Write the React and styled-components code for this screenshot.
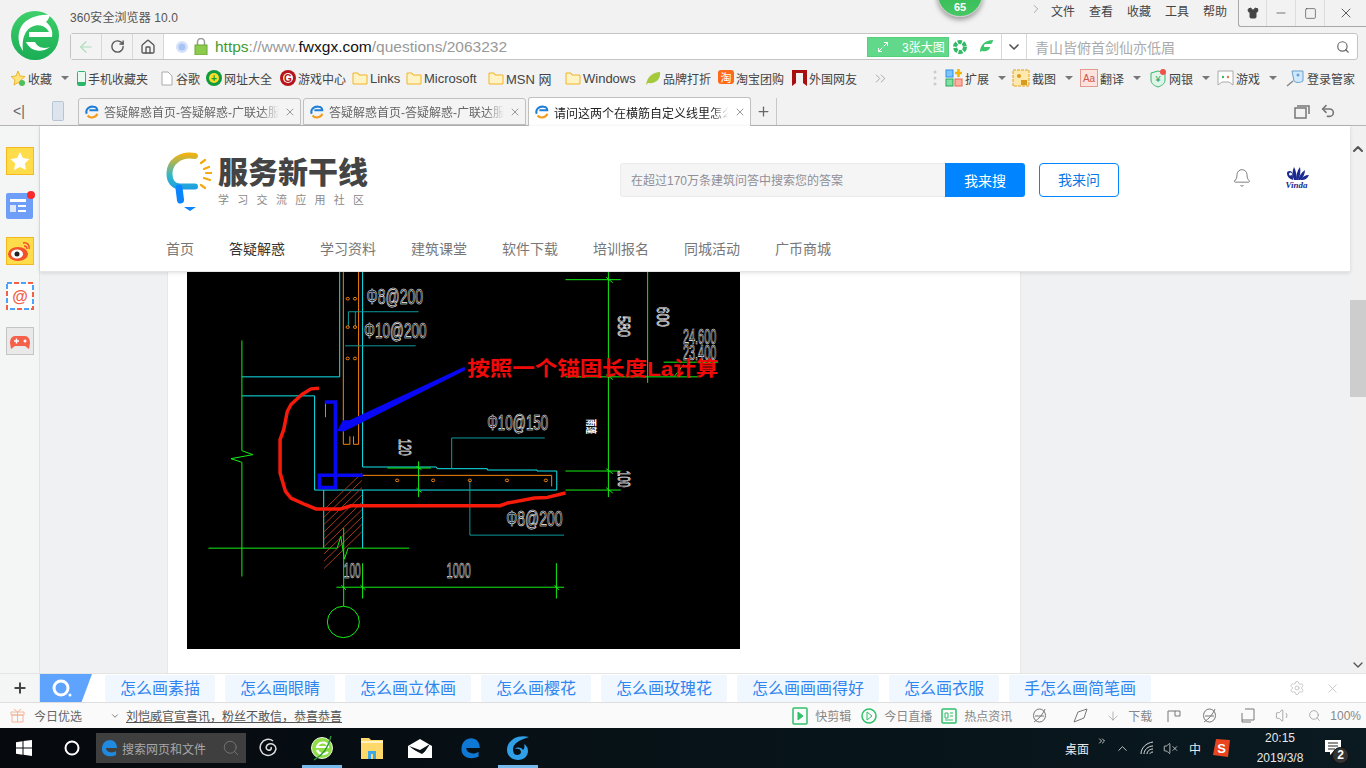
import styled, { createGlobalStyle } from 'styled-components';
import {
  ArrowLeft, RotateCw, Home, Search, ChevronDown, ChevronRight, Plus, X, Minus, Square, Bell,
  Settings, ArrowDown, Undo2, Shirt, ChevronUp, ChevronsRight, Maximize2, Volume1, VolumeX,
} from 'lucide-react';

const GlobalStyle = createGlobalStyle`
  html, body { margin: 0; padding: 0; height: 100%; overflow: hidden; }
  body { font-family: "Liberation Sans", "Noto Sans CJK SC", sans-serif; font-size: 12px; color: #444; }
  * { box-sizing: border-box; }
`;

const Screen = styled.div`
  width: 1366px;
  height: 768px;
  display: flex;
  flex-direction: column;
  background: #f2f2f2;
  overflow: hidden;
`;

/* ---------- browser chrome ---------- */
const TopChrome = styled.div`
  position: relative;
  display: grid;
  grid-template-columns: 70px 1fr;
  grid-template-rows: 33px 27px;
  flex: none;
`;
const LogoCell = styled.div`
  grid-row: 1 / 3;
  padding: 11px 0 0 11px;
`;
const TitleRow = styled.div`
  display: flex;
  align-items: flex-start;
  justify-content: space-between;
`;
const TitleText = styled.div`
  margin-top: 8px;
  font-size: 12px;
  letter-spacing: 0.1px;
  color: #555;
`;
const MenuArea = styled.div`
  display: flex;
  align-items: flex-start;
  color: #444;
`;
const MenuItem = styled.span`
  margin: 2px ${(p) => p.$mr ?? 14}px 0 0;
  font-size: 12px;
`;
const WindowBox = styled.div`
  display: flex;
  height: 27px;
  margin-left: -3px;
  border-left: 1px solid #a8a8a8;
  border-bottom: 1px solid #a8a8a8;
  border-bottom-left-radius: 3px;
`;
const WindowBtn = styled.div`
  width: ${(p) => p.$w}px;
  display: flex;
  align-items: center;
  justify-content: center;
  border-right: ${(p) => (p.$last ? 'none' : '1px solid #dcdcdc')};
  color: #444;
`;
const ScoreBadge = styled.div`
  position: absolute;
  left: 937px;
  top: -29px;
  width: 46px;
  height: 46px;
  border-radius: 50%;
  background: linear-gradient(#27b24a, #46c764);
  border: 1px solid #c9c9c9;
  box-shadow: 0 3px 5px rgba(0, 0, 0, 0.35);
  color: #fff;
  font-size: 11px;
  font-weight: bold;
  text-align: center;
  padding-top: 29px;
`;
const AddressBar = styled.div`
  display: flex;
  align-items: center;
  height: 27px;
  margin-right: 8px;
  background: #fff;
  border: 1px solid #c4c4c4;
  border-radius: 3px;
`;
const NavButton = styled.div`
  width: 31px;
  height: 100%;
  flex: none;
  display: flex;
  align-items: center;
  justify-content: center;
  background: #f3f3f3;
  border-right: 1px solid #d8d8d8;
  color: ${(p) => p.$color || '#555'};
`;
const UrlArea = styled.div`
  flex: 1;
  display: flex;
  align-items: center;
  gap: 6px;
  padding-left: 12px;
  min-width: 0;
`;
const Url = styled.div`
  margin-left: 1px;
  font-size: 15.5px;
  color: #999;
  white-space: nowrap;
  b { font-weight: normal; color: #111; }
  i { font-style: normal; color: #3f9b2f; }
`;
const BigPicBtn = styled.div`
  width: 82px;
  height: 20px;
  display: flex;
  align-items: center;
  gap: 13px;
  padding-left: 9px;
  background: #62d98a;
  border: 1px solid #55cf7e;
  color: #fff;
  font-size: 12px;
  flex: none;
`;
const AddrIcons = styled.div`
  display: flex;
  gap: 12px;
  padding: 0 7px 0 4px;
  align-items: center;
  flex: none;
`;
const DropCell = styled.div`
  width: 26px;
  height: 100%;
  display: flex;
  align-items: center;
  justify-content: center;
  flex: none;
  border-left: 1px solid #d8d8d8;
  border-right: 1px solid #d8d8d8;
  color: #555;
`;
const SearchCell = styled.div`
  width: 330px;
  display: flex;
  align-items: center;
  justify-content: space-between;
  padding: 0 7px 0 8px;
  color: #aaa;
  font-size: 14px;
  flex: none;
`;
const BookmarkRow = styled.div`
  display: flex;
  align-items: center;
  height: 37px;
  padding: 0 0 1px 10px;
  flex: none;
`;
const Bookmark = styled.div`
  display: flex;
  align-items: center;
  gap: 2px;
  width: ${(p) => p.$w}px;
  flex: none;
  white-space: nowrap;
  color: #444;
  font-size: ${(p) => (p.$latin ? 13 : 12)}px;
`;
const Caret = styled.span`
  width: 0;
  height: 0;
  margin-left: 7px;
  border-left: 4px solid transparent;
  border-right: 4px solid transparent;
  border-top: 4px solid #777;
`;
const TabRow = styled.div`
  display: flex;
  align-items: flex-end;
  height: 29px;
  border-bottom: 1px solid #b4b4b4;
  flex: none;
  padding-left: 13px;
`;
const TabLead = styled.div`
  width: 65px;
  height: 28px;
  display: flex;
  align-items: center;
  gap: 27px;
  color: #666;
  font-size: 14px;
`;
const Tab = styled.div`
  width: 223px;
  margin-right: 2px;
  margin-bottom: ${(p) => (p.$active ? -1 : 0)}px;
  height: ${(p) => (p.$active ? 29 : 27)}px;
  display: flex;
  align-items: center;
  gap: 5px;
  padding: 0 4px 0 6px;
  background: ${(p) => (p.$active ? '#fff' : '#f4f4f4')};
  border: 1px solid #c0c0c0;
  border-bottom: ${(p) => (p.$active ? 'none' : '1px solid #c0c0c0')};
  border-radius: 3px 3px 0 0;
  font-size: 12px;
  color: ${(p) => (p.$active ? '#222' : '#666')};
`;
const TabTitle = styled.span`
  flex: 1;
  white-space: nowrap;
  overflow: hidden;
  -webkit-mask-image: linear-gradient(90deg, #000 90%, transparent);
  mask-image: linear-gradient(90deg, #000 90%, transparent);
`;
const NewTab = styled.div`
  width: 26px;
  height: 27px;
  margin-left: -2px;
  display: flex;
  align-items: center;
  justify-content: center;
  border-right: 1px solid #c8c8c8;
  color: #666;
`;
const TabTools = styled.div`
  margin-left: auto;
  height: 28px;
  padding-right: 30px;
  display: flex;
  align-items: center;
  gap: 10px;
  color: #777;
`;

/* ---------- middle ---------- */
const Middle = styled.div`
  flex: 1;
  display: flex;
  min-height: 0;
`;
const SideBar = styled.div`
  width: 40px;
  flex: none;
  display: flex;
  flex-direction: column;
  align-items: center;
  gap: 17px;
  padding: 21px 0 0 0;
  background: #f4f5f5;
  border-right: 1px solid #e2e2e2;
`;
const SideIcon = styled.div`
  position: relative;
  width: 28px;
  height: 28px;
  display: flex;
  align-items: center;
  justify-content: center;
`;
const RedDot = styled.span`
  position: absolute;
  right: -1px;
  top: -1px;
  width: 8px;
  height: 8px;
  border-radius: 50%;
  background: #fb2a2a;
`;
const PageArea = styled.div`
  flex: 1;
  display: flex;
  flex-direction: column;
  min-width: 0;
`;
const Header = styled.div`
  height: 146px;
  flex: none;
  padding-left: 126px;
  background: #fff;
  border-bottom: 1px solid #e4e4e4;
  box-shadow: 0 1px 4px rgba(0, 0, 0, 0.12);
  position: relative;
  z-index: 1;
`;
const HeaderTop = styled.div`
  height: 106px;
  padding-top: 26px;
  display: flex;
  align-items: flex-start;
`;
const Brand = styled.div`
  display: flex;
  gap: 6px;
  width: 454px;
`;
const BrandText = styled.div`
  padding-top: 5px;
`;
const BrandName = styled.div`
  font-size: 30px;
  line-height: 32px;
  font-weight: 900;
  color: #444;
  white-space: nowrap;
`;
const BrandSub = styled.div`
  margin-top: 4px;
  font-size: 11px;
  line-height: 14px;
  letter-spacing: 8.3px;
  color: #8a8a8a;
  white-space: nowrap;
`;
const SearchForm = styled.div`
  display: flex;
  height: 34px;
  margin-top: 11px;
`;
const SearchInput = styled.div`
  width: 325px;
  padding: 1px 0 0 10px;
  line-height: 33px;
  font-size: 12px;
  color: #8f8f98;
  background: #f5f5f5;
  border: 1px solid #ebebeb;
  border-right: none;
  border-radius: 3px 0 0 3px;
`;
const SearchBtn = styled.div`
  width: 80px;
  padding-top: 1px;
  text-align: center;
  line-height: 34px;
  font-size: 14px;
  color: #fff;
  background: #0084ff;
  border-radius: 0 3px 3px 0;
`;
const AskBtn = styled.div`
  width: 80px;
  height: 34px;
  margin: 11px 0 0 14px;
  text-align: center;
  line-height: 33px;
  font-size: 14px;
  color: #0a78e6;
  border: 1px solid #0084ff;
  border-radius: 4px;
`;
const HeaderIcons = styled.div`
  display: flex;
  align-items: center;
  gap: 32px;
  margin: 14px 0 0 113px;
  color: #666;
`;
const VindaMark = styled.div`
  display: flex;
  flex-direction: column;
  align-items: center;
  gap: 1px;
  color: #1b2a90;
  font-family: "Liberation Serif", serif;
  font-size: 9px;
  font-style: italic;
  font-weight: bold;
  line-height: 8px;
`;
const NavRow = styled.div`
  display: flex;
  gap: 35px;
  font-size: 14px;
  line-height: 20px;
  margin-top: 7px;
`;
const NavLink = styled.span`
  color: ${(p) => (p.$on ? '#333' : '#777')};
`;
const Body = styled.div`
  flex: 1;
  background: #f0f1f2;
  padding-left: 127px;
  min-height: 0;
  overflow: hidden;
`;
const Article = styled.div`
  width: 854px;
  height: 100%;
  padding-left: 19px;
  background: #fff;
  border-left: 1px solid #e8e8e8;
  border-right: 1px solid #e8e8e8;
`;
const Drawing = styled.svg`
  display: block;
  width: 553px;
  height: 377px;
  background: #000;
  polyline, path, ellipse {
    vector-effect: non-scaling-stroke;
    fill: none;
  }
`;
const CadLabel = styled.text`
  fill: none;
  stroke: #fff;
  stroke-width: 0.7px;
  vector-effect: non-scaling-stroke;
  font-family: "Liberation Sans", sans-serif;
  font-size: ${(p) => p.$size}px;
`;
const ScrollTrack = styled.div`
  width: 16px;
  flex: none;
  display: flex;
  flex-direction: column;
  align-items: center;
  justify-content: space-between;
  background: #f1f1f1;
  position: relative;
  color: #555;
  padding: 15px 0 0;
`;
const ScrollThumb = styled.div`
  position: absolute;
  top: 174px;
  left: 0;
  width: 16px;
  height: 97px;
  background: #cdcdcd;
`;

/* ---------- search strip and status ---------- */
const KeywordBar = styled.div`
  height: 29px;
  flex: none;
  display: flex;
  align-items: center;
  background: #fff;
  border-top: 1px solid #e4e4e4;
`;
const PlusCell = styled.div`
  width: 40px;
  height: 100%;
  display: flex;
  align-items: center;
  justify-content: center;
  background: #f4f5f5;
  border-right: 1px solid #e6e6e6;
  color: #444;
`;
const SoBrand = styled.div`
  width: 52px;
  height: 100%;
  margin-right: 13px;
  padding-left: 11px;
  display: flex;
  align-items: center;
  background: #5ea4ff;
  clip-path: polygon(0 0, 100% 0, 80% 100%, 0 100%);
`;
const KeywordList = styled.div`
  display: flex;
  gap: 10px;
  flex: 1;
`;
const Keyword = styled.div`
  height: 27px;
  padding: 0 15px;
  line-height: 27px;
  font-size: 16px;
  color: #2f86ef;
  background: #f1f7fe;
  border-radius: 2px;
`;
const KeywordTools = styled.div`
  display: flex;
  align-items: center;
  gap: 20px;
  padding-right: 26px;
  color: #bbb;
`;
const StatusBar = styled.div`
  height: 26px;
  flex: none;
  display: flex;
  align-items: center;
  justify-content: space-between;
  padding: 0 5px 0 10px;
  background: #fafafa;
  border-top: 1px solid #dedede;
  color: #666;
  font-size: 12px;
`;
const StatusLeft = styled.div`
  display: flex;
  align-items: center;
`;
const PickLabel = styled.span`
  margin-left: 9px;
  width: 76px;
`;
const NewsLink = styled.span`
  margin-left: 6px;
  color: #555;
  text-decoration: underline;
`;
const StatusRight = styled.div`
  display: flex;
  align-items: center;
`;
const StatusItem = styled.span`
  display: flex;
  align-items: center;
  gap: ${(p) => p.$gap ?? 7}px;
  margin-left: ${(p) => p.$ml ?? 12}px;
  color: #888;
`;
const TaskBar = styled.div`
  height: 40px;
  flex: none;
  display: flex;
  align-items: center;
  background: linear-gradient(90deg, #06090d, #07141a 60%, #0a1a20);
  color: #e8e8e8;
`;
const TaskSlot = styled.div`
  position: relative;
  width: ${(p) => p.$w}px;
  height: 40px;
  flex: none;
  display: flex;
  align-items: center;
  justify-content: center;
  &::after {
    content: '';
    display: ${(p) => (p.$active ? 'block' : 'none')};
    position: absolute;
    left: 50%;
    width: 40px;
    margin-left: -20px;
    bottom: 0;
    height: 3px;
    background: #76b9ed;
  }
`;
const TaskSearch = styled.div`
  width: 150px;
  height: 30px;
  flex: none;
  display: flex;
  align-items: center;
  gap: 4px;
  padding: 0 4px;
  background: #3f3f3f;
  color: #a8a8a8;
  font-size: 12px;
  white-space: nowrap;
`;
const TaskSearchIcon = styled.span`
  display: flex;
  margin-left: 12px;
  color: #777;
`;
const Tray = styled.div`
  margin-left: auto;
  display: flex;
  align-items: center;
  font-size: 12px;
`;
const ClockBox = styled.div`
  width: 66px;
  margin-left: 12px;
  text-align: center;
  font-size: 12px;
  line-height: 20px;
`;
const Notify = styled.div`
  position: relative;
  width: 53px;
  height: 40px;
  padding-left: 12px;
  display: flex;
  align-items: center;
`;
const NotifyCount = styled.span`
  position: absolute;
  left: 19px;
  top: 19px;
  width: 17px;
  height: 17px;
  border-radius: 50%;
  background: #333;
  border: 1px solid #111;
  color: #fff;
  font-size: 12px;
  font-weight: bold;
  line-height: 15px;
  text-align: center;
`;
const DoubleUp = styled.span`
  display: flex;
  margin-top: -14px;
`;

/* ---------- drawn icons ---------- */
const BrowserLogo = () => (
  <svg width="48" height="49" viewBox="0 0 48 49">
    <defs>
      <linearGradient id="lg" x1="0" y1="0" x2="0" y2="1">
        <stop offset="0" stopColor="#3fd06a" />
        <stop offset="1" stopColor="#19ad55" />
      </linearGradient>
    </defs>
    <ellipse cx="24" cy="24.5" rx="24" ry="24.5" fill="url(#lg)" />
    <path d="M39 4C28 3 15 7 10 16 6 24 7 33 12 40 11 32 12 26 15 21 20 13 31 12 36 18L38 21H18V26H41C42 20 40 15 35 11 37 9 38 7 39 4Z" fill="#fff" />
    <path d="M15 31C18 38 28 44 39 36 33 38 27 37 24 31Z" fill="#fff" />
  </svg>
);
const Fav = () => (
  <svg width="14" height="14" viewBox="0 0 16 16" style={{ flex: 'none' }}>
    <path d="M2 10C0 5 5 1 10 2c2 0 4 2 4 4H5" fill="none" stroke="#1f7fd8" strokeWidth="2.4" />
    <path d="M14 10c-1 4-8 6-11 2" fill="none" stroke="#f39b1c" strokeWidth="2.4" />
  </svg>
);
const Folder = () => (
  <svg width="16" height="14" viewBox="0 0 16 14">
    <path d="M1 2h5l1 2h8v9H1z" fill="#fff3c4" stroke="#f0b429" />
  </svg>
);
const Star = () => (
  <svg width="16" height="17" viewBox="0 0 16 17">
    <path d="M8 1l2 5 5 .5-4 3.500 1 5-4-2.500L4 15l1-5-4-3.500L6 6z" fill="#ffe27a" stroke="#eeb52c" />
    <circle cx="12" cy="13" r="3" fill="#4cc15a" />
  </svg>
);
const Phone = () => (
  <svg width="9" height="15" viewBox="0 0 9 15"><rect x=".5" y=".5" width="8" height="14" rx="1" fill="#e9fbf1" stroke="#2cb66a" /><rect x="1" y="11" width="7" height="3" fill="#2cb66a" /></svg>
);
const PageIcon = () => (
  <svg width="14" height="15" viewBox="0 0 14 15"><path d="M2 1h6l4 4v9H2z" fill="#fff" stroke="#aaa" /></svg>
);
const Disc = ({ bg, fg, ch }) => (
  <svg width="16" height="16" viewBox="0 0 16 16">
    <circle cx="8" cy="8" r="8" fill={bg} />
    <circle cx="8" cy="8" r="5" fill={fg} />
    <text x="8" y="12" fontSize="10" fontWeight="bold" fill={bg} textAnchor="middle">{ch}</text>
  </svg>
);
const Leaf = () => (
  <svg width="16" height="15" viewBox="0 0 16 15"><path d="M1 14C2 6 8 1 15 1c1 7-4 12-12 11z" fill="#a5c93d" /></svg>
);
const TaoBao = () => (
  <svg width="16" height="16" viewBox="0 0 16 16"><rect width="16" height="14" rx="3" fill="#ff6a1a" /><text x="8" y="12" fontSize="11" fill="#fff" textAnchor="middle">淘</text></svg>
);
const RedFlag = () => (
  <svg width="15" height="16" viewBox="0 0 15 16"><path d="M0 0h15v16l-4-3V3H4v10l-4 3z" fill="#a81010" /></svg>
);
const Extend = () => (
  <svg width="18" height="18" viewBox="0 0 18 18">
    <rect x="1" y="1" width="7" height="7" fill="#7cc4ff" stroke="#2c8fe0" />
    <rect x="1" y="10" width="7" height="7" fill="#7fe0a0" stroke="#27a85a" />
    <rect x="10" y="10" width="7" height="7" fill="#ffb0a0" stroke="#e86a50" />
    <path d="M13.500 0v8M10 4h7" stroke="#f5b400" strokeWidth="2.500" />
  </svg>
);
const Shot = () => (
  <svg width="18" height="18" viewBox="0 0 18 18"><rect x="1" y="1" width="16" height="16" fill="#fde9ad" stroke="#e0a020" strokeDasharray="3 1" /><circle cx="7" cy="7" r="2" fill="#d99a1e" /><rect x="9" y="11" width="6" height="5" fill="#d99a1e" /></svg>
);
const Trans = () => (
  <svg width="18" height="18" viewBox="0 0 18 18"><rect x=".5" y=".5" width="17" height="17" fill="#fde2de" stroke="#e09a90" /><text x="9" y="13" fontSize="10" fill="#c9564a" textAnchor="middle">Aa</text></svg>
);
const Bank = () => (
  <svg width="17" height="19" viewBox="0 0 17 19"><path d="M8 2l7 2v7c0 4-4 6-7 7-3-1-7-3-7-7V4z" fill="#dff6e7" stroke="#3cb371" /><text x="8" y="13" fontSize="9" fill="#2a9a5a" textAnchor="middle">¥</text><circle cx="13" cy="3" r="3" fill="#f0524a" /></svg>
);
const Pad = () => (
  <svg width="17" height="17" viewBox="0 0 17 17"><path d="M1 1h15v14l-4-3H5l-4 3z" fill="#fff" stroke="#aaa" /><circle cx="6" cy="7" r="1.200" fill="#3cb371" /><circle cx="11" cy="7" r="1.200" fill="#e8724a" /></svg>
);
const KeyIcon = () => (
  <svg width="20" height="20" viewBox="0 0 20 20"><path d="M7 3h11v10c-3 2-7 2-9 0z" fill="#cfe8fb" stroke="#6c9fc9" /><circle cx="13" cy="7" r="1.500" fill="#6c9fc9" /><path d="M8 13l-6 5" stroke="#888" strokeWidth="1.500" /></svg>
);
const LeafE = () => (
  <svg width="15" height="15" viewBox="0 0 15 15"><path d="M1 13C1 6 6 1 14 1c0 2-1 3-2 4H6c-1 1-1 2-1 3h6c0 3-4 5-8 4z" fill="#3ec66d" /></svg>
);
const Aperture = () => (
  <svg width="14" height="14" viewBox="0 0 14 14"><circle cx="7" cy="7" r="5" fill="none" stroke="#2fbb63" strokeWidth="4" strokeDasharray="4 1.200" /></svg>
);
const Bulb = () => (
  <svg width="46" height="60" viewBox="0 0 46 60">
    <defs>
      <linearGradient id="bulb" gradientUnits="userSpaceOnUse" x1="0" y1="2" x2="0" y2="50">
        <stop offset="0" stopColor="#f2b212" />
        <stop offset=".45" stopColor="#32b8c6" />
        <stop offset="1" stopColor="#0a84ff" />
      </linearGradient>
    </defs>
    <path d="M29 4C14 1 3 11 3.500 22c0 7 4 12 10 12.500H29" fill="none" stroke="url(#bulb)" strokeWidth="6" strokeLinecap="round" />
    <path d="M13 36l1.500 12" fill="none" stroke="#0a84ff" strokeWidth="7" strokeLinecap="round" />
    <path d="M18 55h12l-6 4z" fill="#0a84ff" />
    <path d="M35 11l4-3M38 17l5-2M40 21h6M38 26l6 2M35 33l4 3" stroke="#f5a90f" strokeWidth="2.200" strokeLinecap="round" />
  </svg>
);
const VindaFan = () => (
  <svg width="25" height="14" viewBox="0 0 25 14">
    <g fill="#1b2a90">
      <path d="M10 14C8 10 8 5 10 1c2 4 3 8 2 13z" />
      <path d="M12 14c0-5 1-9 4-13 1 5 0 9-2 13z" />
      <path d="M14 14c1-4 3-7 7-10 0 4-2 8-5 10z" />
      <path d="M16 14c2-3 5-5 9-5-1 3-4 5-7 5z" />
      <path d="M9 14C6 13 3 11 3 7c0-2 3-3 5-1 1 3 1 5 1 8zM5 8a1.500 1.500 0 1 0 3 0 1.500 1.500 0 1 0-3 0z" fillRule="evenodd" />
    </g>
  </svg>
);
const SideStar = () => (
  <svg width="28" height="28" viewBox="0 0 28 28"><rect x=".5" y=".5" width="27" height="27" fill="#ffdc4a" stroke="#f5b81e" /><path d="M14 5l3 6 6.500 1-4.700 4.500 1.200 6.500L14 20l-6 3 1.200-6.500L4.500 12l6.500-1z" fill="#fff" /></svg>
);
const SideNews = () => (
  <svg width="28" height="26" viewBox="0 0 28 26"><rect width="27" height="26" rx="2" fill="#6f9ef8" /><rect x="4" y="6" width="16" height="3" fill="#fff" /><rect x="4" y="12" width="6" height="7" fill="#dbe7ff" /><rect x="12" y="12" width="8" height="2" fill="#fff" /><rect x="12" y="17" width="8" height="2" fill="#fff" /></svg>
);
const SideWeibo = () => (
  <svg width="28" height="28" viewBox="0 0 28 28"><rect x=".5" y=".5" width="27" height="27" fill="#ffdc4a" stroke="#f5b81e" /><ellipse cx="12" cy="17" rx="10" ry="7" fill="#f0522a" /><ellipse cx="11" cy="17" rx="6" ry="4.500" fill="#fff" /><circle cx="11" cy="17" r="2.500" fill="#222" /><path d="M17 6c4-1 7 2 6 6M18 9c2 0 3 1 3 3" fill="none" stroke="#f0522a" strokeWidth="1.500" /></svg>
);
const SideMail = () => (
  <svg width="28" height="28" viewBox="0 0 28 28">
    <rect x="1" y="1" width="26" height="26" fill="#fff" stroke="#4aa3f5" strokeWidth="2" strokeDasharray="5 9" />
    <rect x="1" y="1" width="26" height="26" fill="none" stroke="#f0604a" strokeWidth="2" strokeDasharray="5 9" strokeDashoffset="7" />
    <text x="14" y="20" fontSize="16" fontWeight="bold" fill="#f0604a" textAnchor="middle">@</text>
  </svg>
);
const SideGame = () => (
  <svg width="28" height="28" viewBox="0 0 28 28"><rect x=".5" y=".5" width="27" height="27" fill="#e9e9e9" stroke="#c4c4c4" /><path d="M5 22l-1-6c0-4 2-7 5-7h10c3 0 5 3 5 7l-1 6-4-3H9z" fill="#f5604a" /><path d="M8 14h5M10.500 11.500v5" stroke="#fff" strokeWidth="1.500" /><circle cx="19" cy="14" r="1.500" fill="#fff" /></svg>
);
const SoLogo = () => (
  <svg width="22" height="20" viewBox="0 0 22 20"><circle cx="10" cy="10" r="7" fill="none" stroke="#fff" strokeWidth="3" /><circle cx="19" cy="17" r="1.500" fill="#fff" /></svg>
);
const Gift = () => (
  <svg width="15" height="15" viewBox="0 0 15 15"><path d="M1 4h13v3H1zM2 7h11v7H2zM7.500 4v10M4 1l3.500 3L11 1" fill="none" stroke="#f3b49a" /></svg>
);
const GreenBox = ({ round }) => (
  <svg width="16" height="18" viewBox="0 0 16 18">
    {round
      ? <circle cx="8" cy="9" r="7" fill="none" stroke="#2fc06a" strokeWidth="1.500" />
      : <rect x="1" y="1" width="14" height="16" rx="1" fill="none" stroke="#2fc06a" strokeWidth="1.500" />}
    <path d="M6 5l5 4-5 4z" fill={round ? 'none' : '#2fc06a'} stroke="#2fc06a" />
  </svg>
);
const NewsBox = () => (
  <svg width="16" height="18" viewBox="0 0 16 18">
    <rect x="1" y="2" width="14" height="14" rx="1" fill="none" stroke="#2fc06a" strokeWidth="1.500" />
    <path d="M4 6h3v5H4zM9 6h3M9 9h3M4 13h8" fill="none" stroke="#2fc06a" />
  </svg>
);
const WinLogo = () => (
  <svg width="16" height="16" viewBox="0 0 16 16"><path d="M0 2.300l6.500-1v6.300H0zM7.500 1.100L16 0v7.600H7.500zM0 8.500h6.500v6.300L0 13.800zM7.500 8.500H16V16l-8.500-1.200z" fill="#fff" /></svg>
);
const EdgeE = ({ s = 18, c = '#1f8ae0' }) => (
  <svg width={s} height={s} viewBox="0 0 18 18"><path d="M2 10C2 4 6 1 10 1c4 0 7 3 7 8H6c0 4 6 6 10 3v4c-6 3-14 1-14-6z" fill={c} /></svg>
);
const LineE = () => (
  <svg width="15" height="15" viewBox="0 0 15 15"><ellipse cx="7.500" cy="7.500" rx="6" ry="6.500" fill="none" stroke="#777" /><path d="M3 8h9M2 14C7 11 11 6 13 1" fill="none" stroke="#777" /></svg>
);
const Swirl = () => (
  <svg width="20" height="20" viewBox="0 0 20 20"><path d="M15 3A8 8 0 1 0 18 11c0-4-4-6-7-5-3 1-4 5-1 6 2 1 4-1 3-3" fill="none" stroke="#ddd" strokeWidth="1.500" /></svg>
);
const TaskBrowser = () => (
  <svg width="22" height="26" viewBox="0 0 22 26">
    <circle cx="11" cy="13" r="10.500" fill="#8fdc45" stroke="#e8f5e0" />
    <path d="M6 12h11c-1-6-9-6-11 0zm0 3c2 5 8 5 11 2" fill="none" stroke="#fff" strokeWidth="2.200" />
    <path d="M3 25C12 20 18 11 20 1" fill="none" stroke="#2f9a3a" strokeWidth="1.300" />
  </svg>
);
const Explorer = () => (
  <svg width="22" height="22" viewBox="0 0 22 22"><path d="M0 1h8l2 2h12v19H0z" fill="#ffd86a" /><rect x="0" y="4" width="22" height="2" fill="#fff3c4" /><rect x="7" y="14" width="8" height="8" fill="#3fa9e8" /><rect x="10" y="17" width="2" height="5" fill="#ffd86a" /></svg>
);
const Mail = () => (
  <svg width="24" height="19" viewBox="0 0 24 19"><path d="M0 7L12 0l12 7v12H0z" fill="#fff" /><path d="M1 7l11 4 10-6-8 12z" fill="#0a1418" /><path d="M0 8v11h24V7L14 15z" fill="#fff" /></svg>
);
const GBlue = () => (
  <svg width="24" height="26" viewBox="0 0 24 26"><path d="M23 2C12-1 1 5 1 15c0 6 5 10 11 10s10-4 10-9c0-3-1-5-4-7 1 3 0 5-1 6-2-3-6-3-8-1 3-1 6 0 6 3 0 2-2 3-4 3-3 0-4-3-4-6 0-5 6-9 16-12z" fill="#2f9fe8" /></svg>
);
const Sogou = () => (
  <svg width="17" height="18" viewBox="0 0 17 18"><path d="M3 0l14 1-2 17-15-2z" fill="#e8441f" /><text x="8.500" y="14" fontSize="13" fontWeight="bold" fill="#fff" textAnchor="middle">S</text></svg>
);
const WifiIcon = () => (
  <svg width="14" height="14" viewBox="0 0 14 14"><path d="M1 13C1 7 6 2 13 1M4 13c0-4 4-8 9-8M7 13c0-3 3-5 6-5M10 13c0-1 1-2 3-2" fill="none" stroke="#ddd" /></svg>
);
const NotifyIcon = () => (
  <svg width="16" height="16" viewBox="0 0 16 16"><path d="M0 0h16v12H8l-3 3v-3H0z" fill="#fff" /><path d="M3 3h10M3 6h10M3 9h7" stroke="#222" /></svg>
);

/* ---------- CAD drawing, coordinates on a 1521 x 1129 grid offset by 19,8 ---------- */
const cyanLines = [
  [439, 8, 439, 322, 170, 322],
  [502, 8, 502, 592, 705, 592, 707, 597, 845, 597, 845, 601, 982, 601, 982, 604, 1036, 604, 1036, 661, 370, 661, 370, 379, 170, 379],
  [395, 661, 395, 835],
  [502, 661, 502, 835],
];
const orangeLines = [
  [449, 8, 449, 524, 467, 524, 467, 500],
  [491, 8, 491, 524, 477, 524, 477, 500],
  [502, 617, 1022, 617, 1022, 650],
  [400, 400, 400, 443],
];
const tealLines = [
  [463, 170, 463, 127, 656, 127],
  [482, 127, 482, 170],
  [454, 229, 648, 229],
  [747, 598, 747, 505, 1003, 505],
  [797, 632, 797, 796, 1056, 796],
];
const greenLines = [
  [170, 213, 170, 543, 200, 555, 140, 567, 170, 578, 170, 920],
  [78, 835, 432, 835, 442, 800, 452, 868, 462, 835, 630, 835],
  [450, 775, 450, 1008],
  [430, 952, 1056, 952],
  [502, 880, 502, 986],
  [1035, 880, 1035, 986],
  [1178, 8, 1178, 682],
  [1060, 31, 1212, 31],
  [1060, 604, 1212, 604],
  [1060, 661, 1212, 661],
  [1060, 322, 1425, 322],
  [1286, 8, 1286, 340],
  [1330, 278, 1480, 278],
  [656, 575, 656, 682],
  [570, 595, 690, 595],
  [1172, 24, 1190, 40], [1172, 597, 1190, 612], [1172, 654, 1190, 670], [1172, 315, 1190, 330],
  [444, 946, 456, 960], [496, 946, 510, 960], [1030, 946, 1042, 960], [650, 590, 664, 600], [650, 655, 664, 668],
  [1360, 320, 1385, 285],
];
const orangeDots = [
  [461, 88], [481, 88], [461, 173], [481, 173], [461, 267], [481, 267],
  [597, 632], [696, 632], [797, 632], [899, 632], [1006, 632],
];
const cadTexts = [
  ['Φ8@200', 513, 103, 155],
  ['Φ10@200', 506, 205, 172],
  ['Φ10@150', 845, 480, 167],
  ['Φ8@200', 897, 768, 155],
  ['100', 450, 925, 47],
  ['1000', 733, 925, 67],
  ['24.600', 1383, 225, 92],
  ['23.400', 1383, 272, 92],
];
const cadRotated = [
  ['580', 1205, 140, 62],
  ['600', 1312, 112, 60],
  ['120', 601, 508, 50],
  ['100', 1205, 603, 50],
];
const hatch = [];
for (let i = 0; i < 9; i++) {
  const y = 680 + i * 22;
  hatch.push([396, y + 40, 500, y - 70]);
}
const toPoints = (a) => a.reduce((s, v, i) => s + v + (i % 2 ? ' ' : ','), '');
const redStroke = 'M382 356L360 358 335 375 305 405 295 425 285 480 275 510 275 610 290 665 305 685 345 705 375 718 440 718 470 708 880 708 900 700 975 685 1010 683 1060 670';

const CadDrawing = () => (
  <Drawing viewBox="19 8 1521 1129" preserveAspectRatio="none">
    {cyanLines.map((l, i) => <polyline key={i} points={toPoints(l)} stroke="#12e6ee" strokeWidth="1" />)}
    {orangeLines.map((l, i) => <polyline key={i} points={toPoints(l)} stroke="#f5820f" strokeWidth="1" />)}
    {tealLines.map((l, i) => <polyline key={i} points={toPoints(l)} stroke="#0d9a9a" strokeWidth="1" />)}
    {hatch.map((l, i) => <polyline key={i} points={toPoints(l)} stroke="#a33a1c" strokeWidth="1" />)}
    {greenLines.map((l, i) => <polyline key={i} points={toPoints(l)} stroke="#14ee14" strokeWidth="1" />)}
    <ellipse cx="449" cy="1056" rx="44" ry="47" stroke="#14ee14" strokeWidth="1" />
    {orangeDots.map(([x, y], i) => <ellipse key={i} cx={x} cy={y} rx="4.500" ry="4" stroke="#f5820f" strokeWidth="1" />)}
    {cadTexts.map(([t, x, y, w], i) => (
      <CadLabel key={i} x={x} y={y} $size={68} textLength={w} lengthAdjust="spacingAndGlyphs">{t}</CadLabel>
    ))}
    {cadRotated.map(([t, x, y, w], i) => (
      <CadLabel key={i} transform={`translate(${x} ${y}) rotate(90)`} $size={46} textLength={w} lengthAdjust="spacingAndGlyphs">{t}</CadLabel>
    ))}
    <text transform="translate(1118 448) rotate(90)" fontSize="30" fontWeight="bold" fill="#fff" textLength="46" lengthAdjust="spacingAndGlyphs">雨篷</text>
    <path d={redStroke} stroke="#f51a0a" strokeWidth="3.500" strokeLinejoin="round" />
    <path d="M398 397H427V653H383V617H502" stroke="#0808f5" strokeWidth="3.500" />
    <polygon points="782,292 784,302 476,472 450,486 432,484 448,452 466,452" fill="#0808f5" />
    <text x="790" y="319" fontSize="62" fontWeight="bold" fill="#f00a0a" textLength="690" lengthAdjust="spacing" fontFamily="Liberation Sans, Noto Sans CJK SC, sans-serif">按照一个锚固长度La计算</text>
  </Drawing>
);

const bookmarksLeft = [
  { w: 67, icon: <Star />, label: '收藏', caret: true },
  { w: 83, icon: <Phone />, label: '手机收藏夹' },
  { w: 46, icon: <PageIcon />, label: '谷歌' },
  { w: 74, icon: <Disc bg="#0f9b3e" fg="#ffdc2a" ch="+" />, label: '网址大全' },
  { w: 72, icon: <Disc bg="#b6141a" fg="#fff" ch="G" />, label: '游戏中心' },
  { w: 54, icon: <Folder />, label: 'Links', latin: true },
  { w: 82, icon: <Folder />, label: 'Microsoft', latin: true },
  { w: 77, icon: <Folder />, label: 'MSN 网', latin: true },
  { w: 80, icon: <Folder />, label: 'Windows', latin: true },
  { w: 73, icon: <Leaf />, label: '品牌打折' },
  { w: 74, icon: <TaoBao />, label: '淘宝团购' },
  { w: 80, icon: <RedFlag />, label: '外国网友' },
  { w: 61, icon: <ChevronsRight size={17} strokeWidth={1} color="#888" />, label: '' },
  { w: 12, icon: <svg width="4" height="16"><circle cx="2" cy="2" r="1.500" fill="#ccc" /><circle cx="2" cy="8" r="1.500" fill="#ccc" /><circle cx="2" cy="14" r="1.500" fill="#ccc" /></svg>, label: '' },
  { w: 67, icon: <Extend />, label: '扩展', caret: true },
  { w: 68, icon: <Shot />, label: '截图', caret: true },
  { w: 70, icon: <Trans />, label: '翻译', caret: true },
  { w: 67, icon: <Bank />, label: '网银', caret: true },
  { w: 68, icon: <Pad />, label: '游戏', caret: true },
  { w: 75, icon: <KeyIcon />, label: '登录管家' },
];
const menus = ['文件', '查看', '收藏', '工具', '帮助'];
const navLinks = ['首页', '答疑解惑', '学习资料', '建筑课堂', '软件下载', '培训报名', '同城活动', '广币商城'];
const keywords = ['怎么画素描', '怎么画眼睛', '怎么画立体画', '怎么画樱花', '怎么画玫瑰花', '怎么画画画得好', '怎么画衣服', '手怎么画简笔画'];

export default function App() {
  return (
    <Screen>
      <GlobalStyle />
      <TopChrome>
        <LogoCell><BrowserLogo /></LogoCell>
        <TitleRow>
          <TitleText>360安全浏览器 10.0</TitleText>
          <MenuArea>
            <MenuItem $mr={8}><ChevronRight size={14} strokeWidth={1} color="#777" /></MenuItem>
            {menus.map((m) => <MenuItem key={m}>{m}</MenuItem>)}
            <WindowBox>
              <WindowBtn $w={28}><Shirt size={12} fill="#444" /></WindowBtn>
              <WindowBtn $w={29}><Minus size={14} strokeWidth={1.2} /></WindowBtn>
              <WindowBtn $w={29}><Square size={13} strokeWidth={1.2} /></WindowBtn>
              <WindowBtn $w={41} $last><X size={16} strokeWidth={1.3} /></WindowBtn>
            </WindowBox>
          </MenuArea>
        </TitleRow>
        <AddressBar>
          <NavButton $color="#a9dfbb"><ArrowLeft size={18} strokeWidth={1.5} /></NavButton>
          <NavButton><RotateCw size={15} strokeWidth={2.2} /></NavButton>
          <NavButton><Home size={16} strokeWidth={2} /></NavButton>
          <UrlArea>
            <svg width="12" height="12" viewBox="0 0 12 12"><circle cx="6" cy="6" r="6" fill="#d5e2fb" /><circle cx="6" cy="6" r="3.500" fill="#a9c3f5" /></svg>
            <svg width="14" height="17" viewBox="0 0 14 17"><path d="M3.500 7V4a3.500 3.500 0 0 1 7 0v3" fill="none" stroke="#999" strokeWidth="1.500" /><rect x="1" y="7" width="12" height="10" fill="#8ccb4e" stroke="#6aa832" /></svg>
            <Url><i>https</i>://www.<b>fwxgx.com</b>/questions/2063232</Url>
          </UrlArea>
          <BigPicBtn><Maximize2 size={12} />3张大图</BigPicBtn>
          <AddrIcons><Aperture /><LeafE /></AddrIcons>
          <DropCell><ChevronDown size={16} strokeWidth={2.5} /></DropCell>
          <SearchCell>青山皆俯首剑仙亦低眉<Search size={14} color="#666" /></SearchCell>
        </AddressBar>
        <ScoreBadge>65</ScoreBadge>
      </TopChrome>
      <BookmarkRow>
        {bookmarksLeft.map((b, i) => (
          <Bookmark key={i} $w={b.w} $latin={b.latin}>
            {b.icon}{b.label}{b.caret && <Caret />}
          </Bookmark>
        ))}
      </BookmarkRow>
      <TabRow>
        <TabLead>
          <span>&lt;|</span>
          <svg width="12" height="20" viewBox="0 0 12 20"><rect x=".5" y=".5" width="11" height="19" rx="1" fill="#dce4ee" stroke="#b8c4d4" /></svg>
        </TabLead>
        <Tab><Fav /><TabTitle>答疑解惑首页-答疑解惑-广联达服务新干线</TabTitle><X size={12} color="#999" /></Tab>
        <Tab><Fav /><TabTitle>答疑解惑首页-答疑解惑-广联达服务新干线</TabTitle><X size={12} color="#999" /></Tab>
        <Tab $active><Fav /><TabTitle>请问这两个在横筋自定义线里怎么设置</TabTitle><X size={12} color="#999" /></Tab>
        <NewTab><Plus size={15} /></NewTab>
        <TabTools>
          <svg width="16" height="16" viewBox="0 0 16 16"><path d="M3 3h12v8M1 5h11v10H1z" fill="none" stroke="#777" strokeWidth="1.500" /></svg>
          <Undo2 size={16} strokeWidth={2.4} />
        </TabTools>
      </TabRow>
      <Middle>
        <SideBar>
          <SideIcon><SideStar /></SideIcon>
          <SideIcon><SideNews /><RedDot /></SideIcon>
          <SideIcon><SideWeibo /></SideIcon>
          <SideIcon><SideMail /></SideIcon>
          <SideIcon><SideGame /></SideIcon>
        </SideBar>
        <PageArea>
          <Header>
            <HeaderTop>
              <Brand>
                <Bulb />
                <BrandText>
                  <BrandName>服务新干线</BrandName>
                  <BrandSub>学习交流应用社区</BrandSub>
                </BrandText>
              </Brand>
              <SearchForm>
                <SearchInput>在超过170万条建筑问答中搜索您的答案</SearchInput>
                <SearchBtn>我来搜</SearchBtn>
              </SearchForm>
              <AskBtn>我来问</AskBtn>
              <HeaderIcons>
                <Bell size={20} strokeWidth={1} />
                <VindaMark>
                  <VindaFan />
                  Vinda
                </VindaMark>
              </HeaderIcons>
            </HeaderTop>
            <NavRow>
              {navLinks.map((n, i) => <NavLink key={n} $on={i === 1}>{n}</NavLink>)}
            </NavRow>
          </Header>
          <Body>
            <Article><CadDrawing /></Article>
          </Body>
        </PageArea>
        <ScrollTrack>
          <ChevronUp size={16} strokeWidth={3} />
          <ScrollThumb />
          <ChevronDown size={16} strokeWidth={2} />
        </ScrollTrack>
      </Middle>
      <KeywordBar>
        <PlusCell><Plus size={16} strokeWidth={3} /></PlusCell>
        <SoBrand><SoLogo /></SoBrand>
        <KeywordList>
          {keywords.map((k) => <Keyword key={k}>{k}</Keyword>)}
        </KeywordList>
        <KeywordTools><Settings size={16} strokeWidth={1.2} /><X size={15} strokeWidth={1.2} /></KeywordTools>
      </KeywordBar>
      <StatusBar>
        <StatusLeft>
          <Gift />
          <PickLabel>今日优选</PickLabel>
          <ChevronDown size={10} />
          <NewsLink>刘恺威官宣喜讯，粉丝不敢信，恭喜恭喜</NewsLink>
        </StatusLeft>
        <StatusRight>
          <StatusItem><GreenBox />快剪辑</StatusItem>
          <StatusItem $ml={10}><GreenBox round />今日直播</StatusItem>
          <StatusItem $ml={9}><NewsBox />热点资讯</StatusItem>
          <StatusItem $ml={20}><LineE /></StatusItem>
          <StatusItem $ml={26}><svg width="15" height="15" viewBox="0 0 15 15"><path d="M14 1L5 4l-4 10 10-4z" fill="none" stroke="#777" /></svg></StatusItem>
          <StatusItem $ml={18} $gap={8}><ArrowDown size={14} strokeWidth={1} />下载</StatusItem>
          <StatusItem $ml={15}><svg width="14" height="12" viewBox="0 0 14 12"><path d="M1 12V1h12v5H8V1" fill="none" stroke="#777" /></svg></StatusItem>
          <StatusItem $ml={21}><LineE /></StatusItem>
          <StatusItem $ml={24}><svg width="14" height="15" viewBox="0 0 14 15"><path d="M4 1h9v11H1" fill="none" stroke="#777" /><path d="M1 5v9h9" fill="none" stroke="#777" /></svg></StatusItem>
          <StatusItem $ml={20}><Volume1 size={17} strokeWidth={1} /></StatusItem>
          <StatusItem $ml={16}><Search size={13} strokeWidth={1.2} /></StatusItem>
          <StatusItem $ml={9}>100%</StatusItem>
        </StatusRight>
      </StatusBar>
      <TaskBar>
        <TaskSlot $w={48}><WinLogo /></TaskSlot>
        <TaskSlot $w={48}><svg width="16" height="16" viewBox="0 0 16 16"><circle cx="8" cy="8" r="6.500" fill="none" stroke="#fff" strokeWidth="2" /></svg></TaskSlot>
        <TaskSearch>
          <EdgeE s={18} />搜索网页和文件
          <TaskSearchIcon><Search size={18} strokeWidth={1.2} /></TaskSearchIcon>
        </TaskSearch>
        <TaskSlot $w={44}><Swirl /></TaskSlot>
        <TaskSlot $w={64} $active><TaskBrowser /></TaskSlot>
        <TaskSlot $w={36}><Explorer /></TaskSlot>
        <TaskSlot $w={60}><Mail /></TaskSlot>
        <TaskSlot $w={40}><EdgeE s={22} c="#0f78d4" /></TaskSlot>
        <TaskSlot $w={56} $active><GBlue /></TaskSlot>
        <Tray>
          <TaskSlot $w={32}>桌面</TaskSlot>
          <TaskSlot $w={17}><DoubleUp><ChevronsRight size={10} /></DoubleUp></TaskSlot>
          <TaskSlot $w={24}><ChevronUp size={15} strokeWidth={1.3} /></TaskSlot>
          <TaskSlot $w={25}><WifiIcon /></TaskSlot>
          <TaskSlot $w={23}><VolumeX size={15} strokeWidth={1.2} /></TaskSlot>
          <TaskSlot $w={26}>中</TaskSlot>
          <TaskSlot $w={27}><Sogou /></TaskSlot>
          <ClockBox>20:15<br />2019/3/8</ClockBox>
          <Notify><NotifyIcon /><NotifyCount>2</NotifyCount></Notify>
        </Tray>
      </TaskBar>
    </Screen>
  );
}
